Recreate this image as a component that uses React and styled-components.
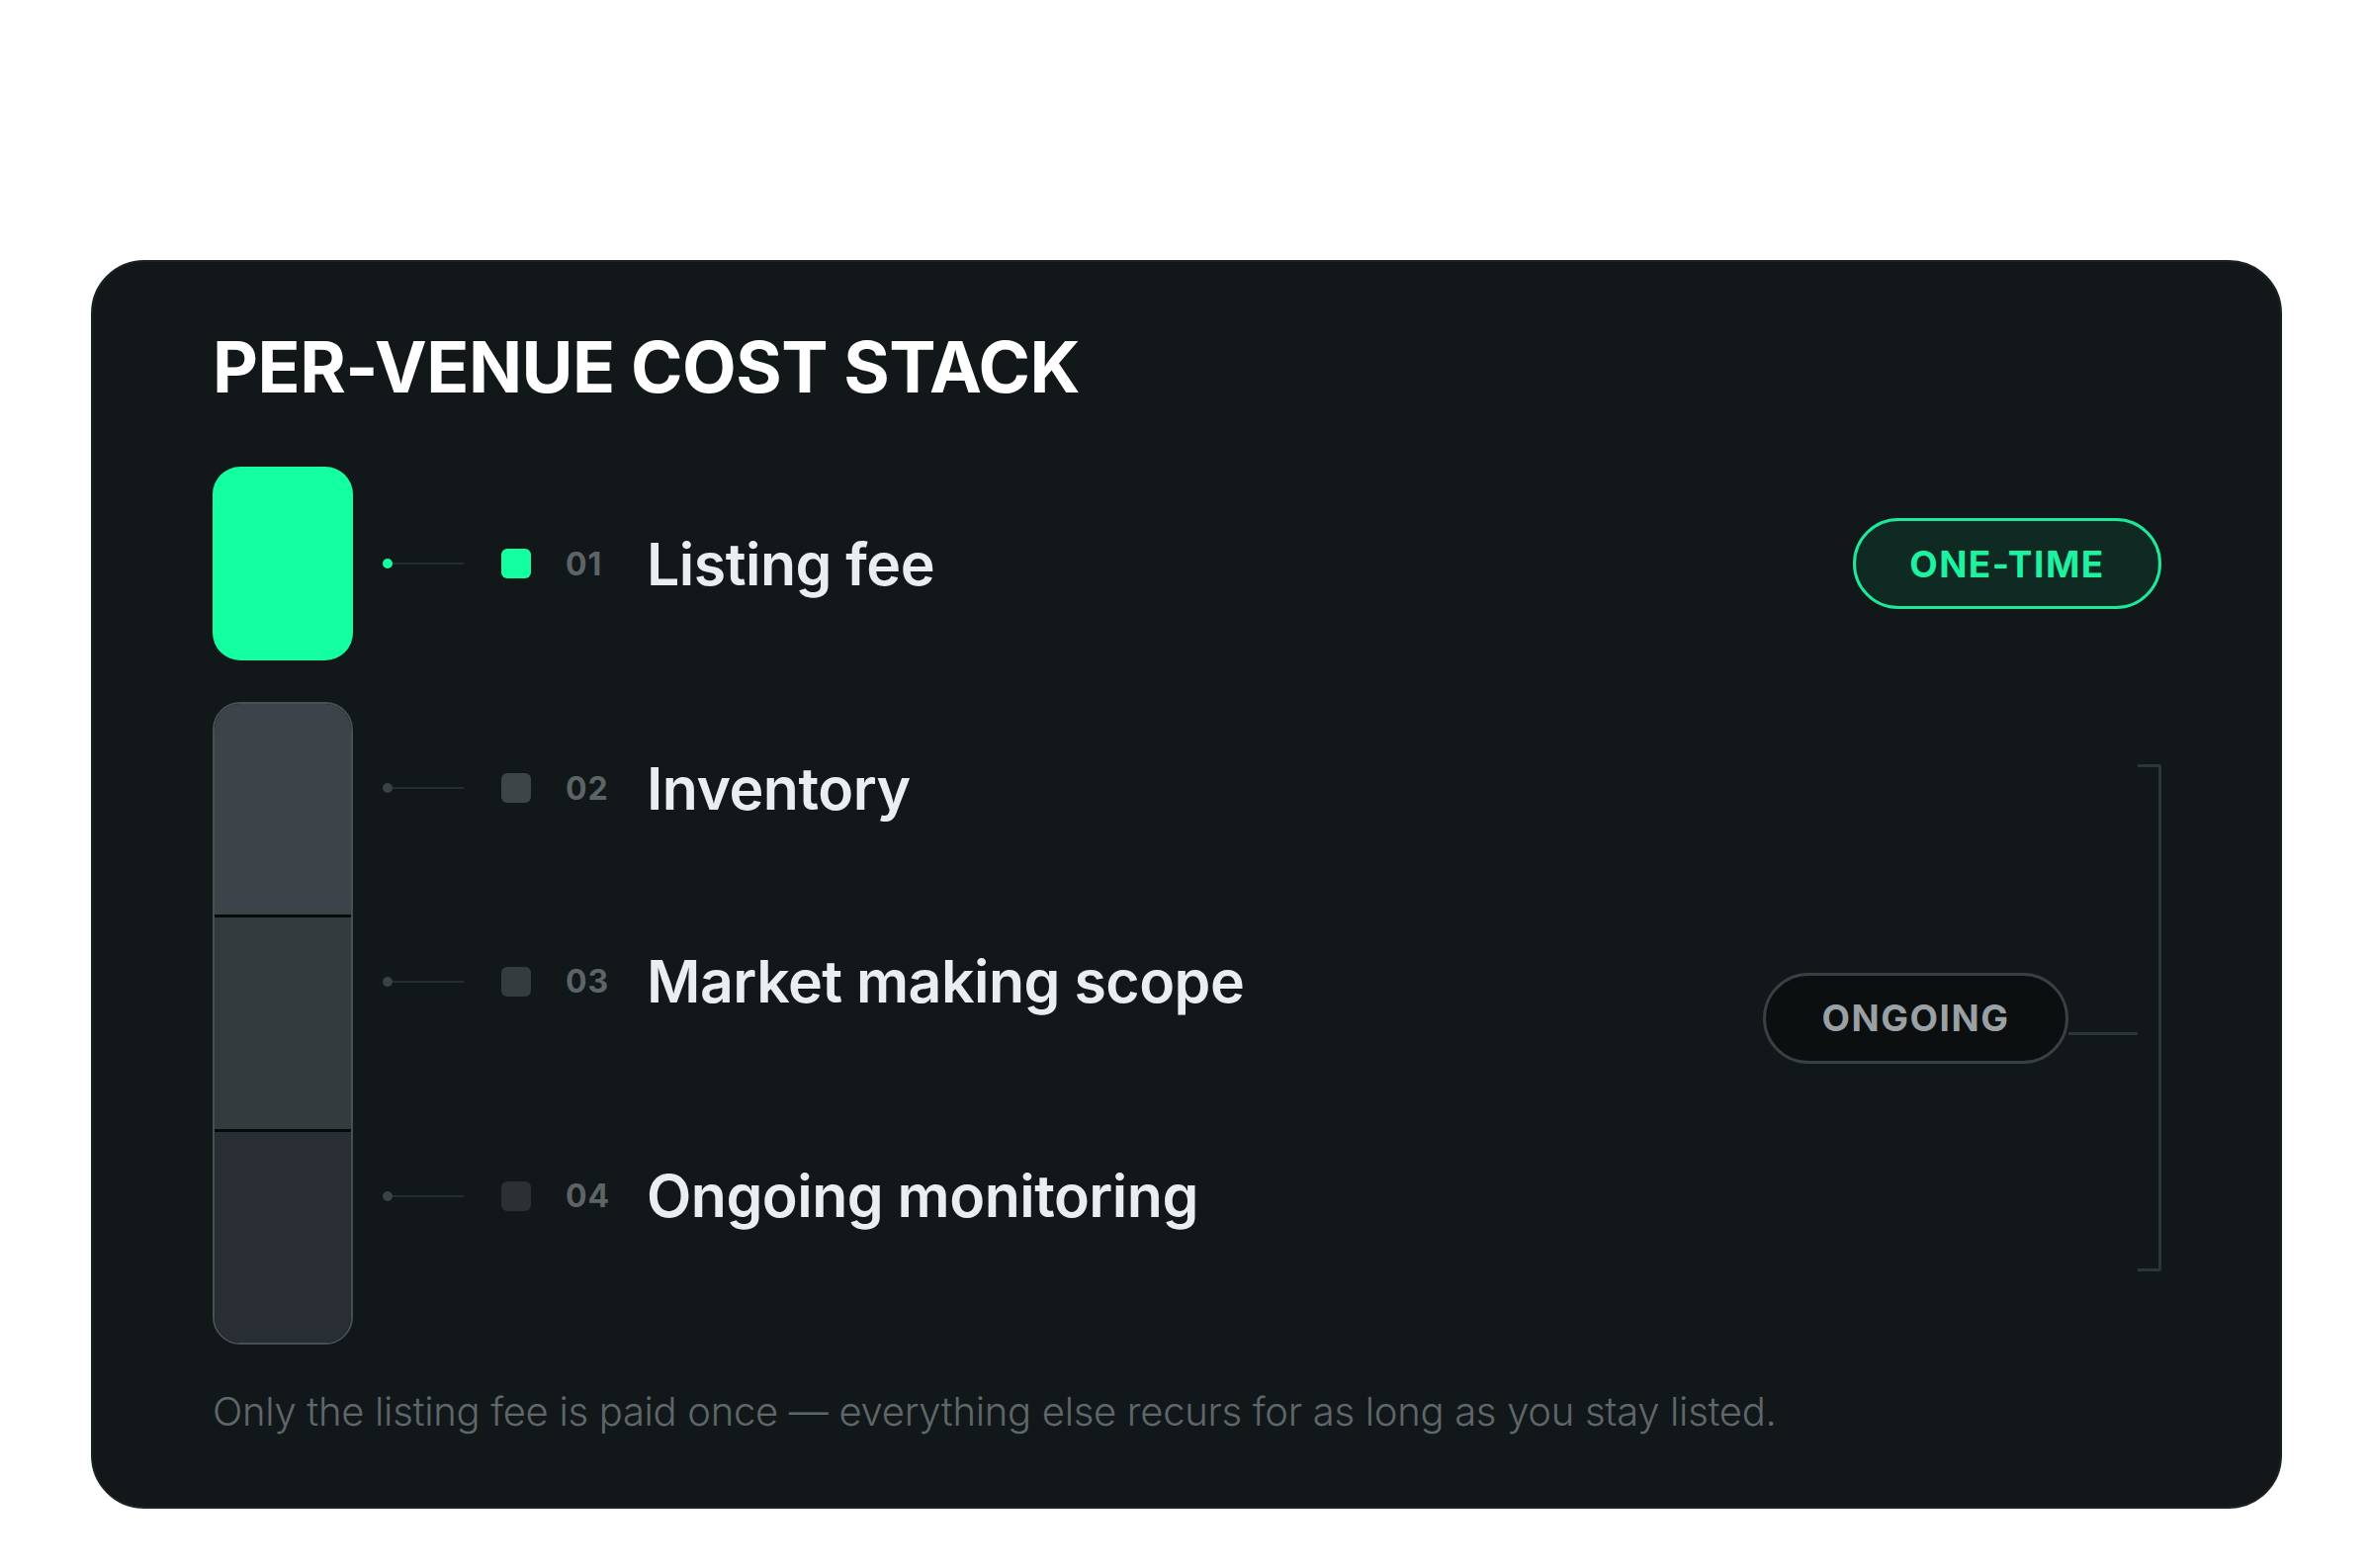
import React from "react";
import styled, { createGlobalStyle } from "styled-components";

const Global = createGlobalStyle`
  html, body { margin: 0; padding: 0; background: #ffffff; }
  body { font-family: Inter, "Noto Sans", sans-serif; }
`;

const Page = styled.div`
  width: 2400px;
  height: 1586px;
  padding: 263px 92px 0 92px;
  box-sizing: border-box;
`;

const Card = styled.section`
  width: 2216px;
  height: 1263px;
  box-sizing: border-box;
  background: #121819;
  border: 2px solid #1c2224;
  border-radius: 54px;
  padding: 66px 120px 0 121px;
  display: flex;
  flex-direction: column;
`;

const Title = styled.h1`
  margin: 0;
  font-size: 71px;
  line-height: 80px;
  font-weight: 700;
  color: #ffffff;
  letter-spacing: -0.5px;
`;

const Body = styled.div`
  margin-top: 61px;
  display: flex;
  gap: 30px;
`;

const BarCol = styled.div`
  width: 142px;
  display: flex;
  flex-direction: column;
  gap: 42px;
`;

const GreenBlock = styled.div`
  height: 196px;
  background: #14ffa0;
  border-radius: 28px;
`;

const GrayStack = styled.div`
  height: 650px;
  box-sizing: border-box;
  border: 2px solid #485054;
  border-radius: 28px;
  overflow: hidden;
  display: flex;
  flex-direction: column;
  gap: 3px;
  background: #070a0b;
`;

const Segment = styled.div`
  flex: 1;
  background: ${(p) => p.$c};
`;

const Grid = styled.div`
  flex: 1;
  display: grid;
  grid-template-columns: 1fr 403px;
  grid-template-rows: 196px 216px 217px 217px;
  row-gap: 0;
`;

const Row = styled.div`
  display: flex;
  align-items: center;
  margin-top: ${(p) => (p.$first ? 0 : "0")};
  grid-column: 1;
`;

const Dot = styled.span`
  width: 10px;
  height: 10px;
  border-radius: 50%;
  background: ${(p) => (p.$on ? "#14ffa0" : "#3a4245")};
  flex: none;
`;

const Line = styled.span`
  width: 72px;
  height: 2px;
  background: #262d30;
  flex: none;
`;

const Square = styled.span`
  width: 30px;
  height: 30px;
  margin-left: 38px;
  border-radius: 6px;
  background: ${(p) => p.$c};
  flex: none;
`;

const Num = styled.span`
  margin-left: 35px;
  width: 47px;
  font-size: 32px;
  font-weight: 700;
  color: #5d6467;
  letter-spacing: 1px;
`;

const Label = styled.span`
  margin-left: 35px;
  font-size: 59px;
  font-weight: 600;
  color: #e9eef0;
  letter-spacing: -0.5px;
`;

const PillCell = styled.div`
  grid-column: 2;
  grid-row: ${(p) => p.$row};
  display: flex;
  align-items: center;
  justify-content: flex-end;
`;

const Pill = styled.div`
  height: 92px;
  box-sizing: border-box;
  border-radius: 46px;
  border: 3px solid ${(p) => p.$b};
  background: ${(p) => p.$bg};
  color: ${(p) => p.$fg};
  display: flex;
  align-items: center;
  justify-content: center;
  width: ${(p) => p.$w}px;
  font-size: 37px;
  font-weight: 700;
  letter-spacing: 1.5px;
  flex: none;
`;

const OngoingCell = styled.div`
  grid-column: 2;
  grid-row: 2 / span 3;
  display: flex;
  align-items: center;
  padding: 63px 0 32px;
  box-sizing: border-box;
`;

const Connector = styled.span`
  flex: 1;
  height: 3px;
  background: #2e3537;
  margin-top: 31px;
`;

const Bracket = styled.div`
  width: 24px;
  align-self: stretch;
  box-sizing: border-box;
  border: 3px solid #2e3537;
  border-left: none;
  border-radius: 0 3px 3px 0;
`;

const Footer = styled.p`
  margin: 43px 0 0;
  font-size: 40px;
  font-weight: 300;
  color: #60676a;
  letter-spacing: -0.3px;
`;

const rows = [
  { n: "01", t: "Listing fee", c: "#14ffa0", on: true },
  { n: "02", t: "Inventory", c: "#3d4549" },
  { n: "03", t: "Market making scope", c: "#343c3f" },
  { n: "04", t: "Ongoing monitoring", c: "#2a3034" },
];

export default function App() {
  return (
    <Page>
      <Global />
      <Card>
        <Title>PER-VENUE COST STACK</Title>
        <Body>
          <BarCol>
            <GreenBlock />
            <GrayStack>
              <Segment $c="#3d4449" />
              <Segment $c="#333b3d" />
              <Segment $c="#282e33" />
            </GrayStack>
          </BarCol>
          <Grid>
            {rows.map((r, i) => (
              <Row key={r.n} style={i === 1 ? { marginTop: 42 } : undefined}>
                <Dot $on={r.on} />
                <Line />
                <Square $c={r.c} />
                <Num>{r.n}</Num>
                <Label>{r.t}</Label>
              </Row>
            ))}
            <PillCell $row={1}>
              <Pill $w={312} $b="#1de99b" $bg="#0f2a22" $fg="#1cf2a0">
                ONE-TIME
              </Pill>
            </PillCell>
            <OngoingCell style={{ marginTop: 42 }}>
              <Pill $w={309} $b="#394043" $bg="#0b0f10" $fg="#9aa1a4">
                ONGOING
              </Pill>
              <Connector />
              <Bracket />
            </OngoingCell>
          </Grid>
        </Body>
        <Footer>
          Only the listing fee is paid once — everything else recurs for as long as you stay listed.
        </Footer>
      </Card>
    </Page>
  );
}
